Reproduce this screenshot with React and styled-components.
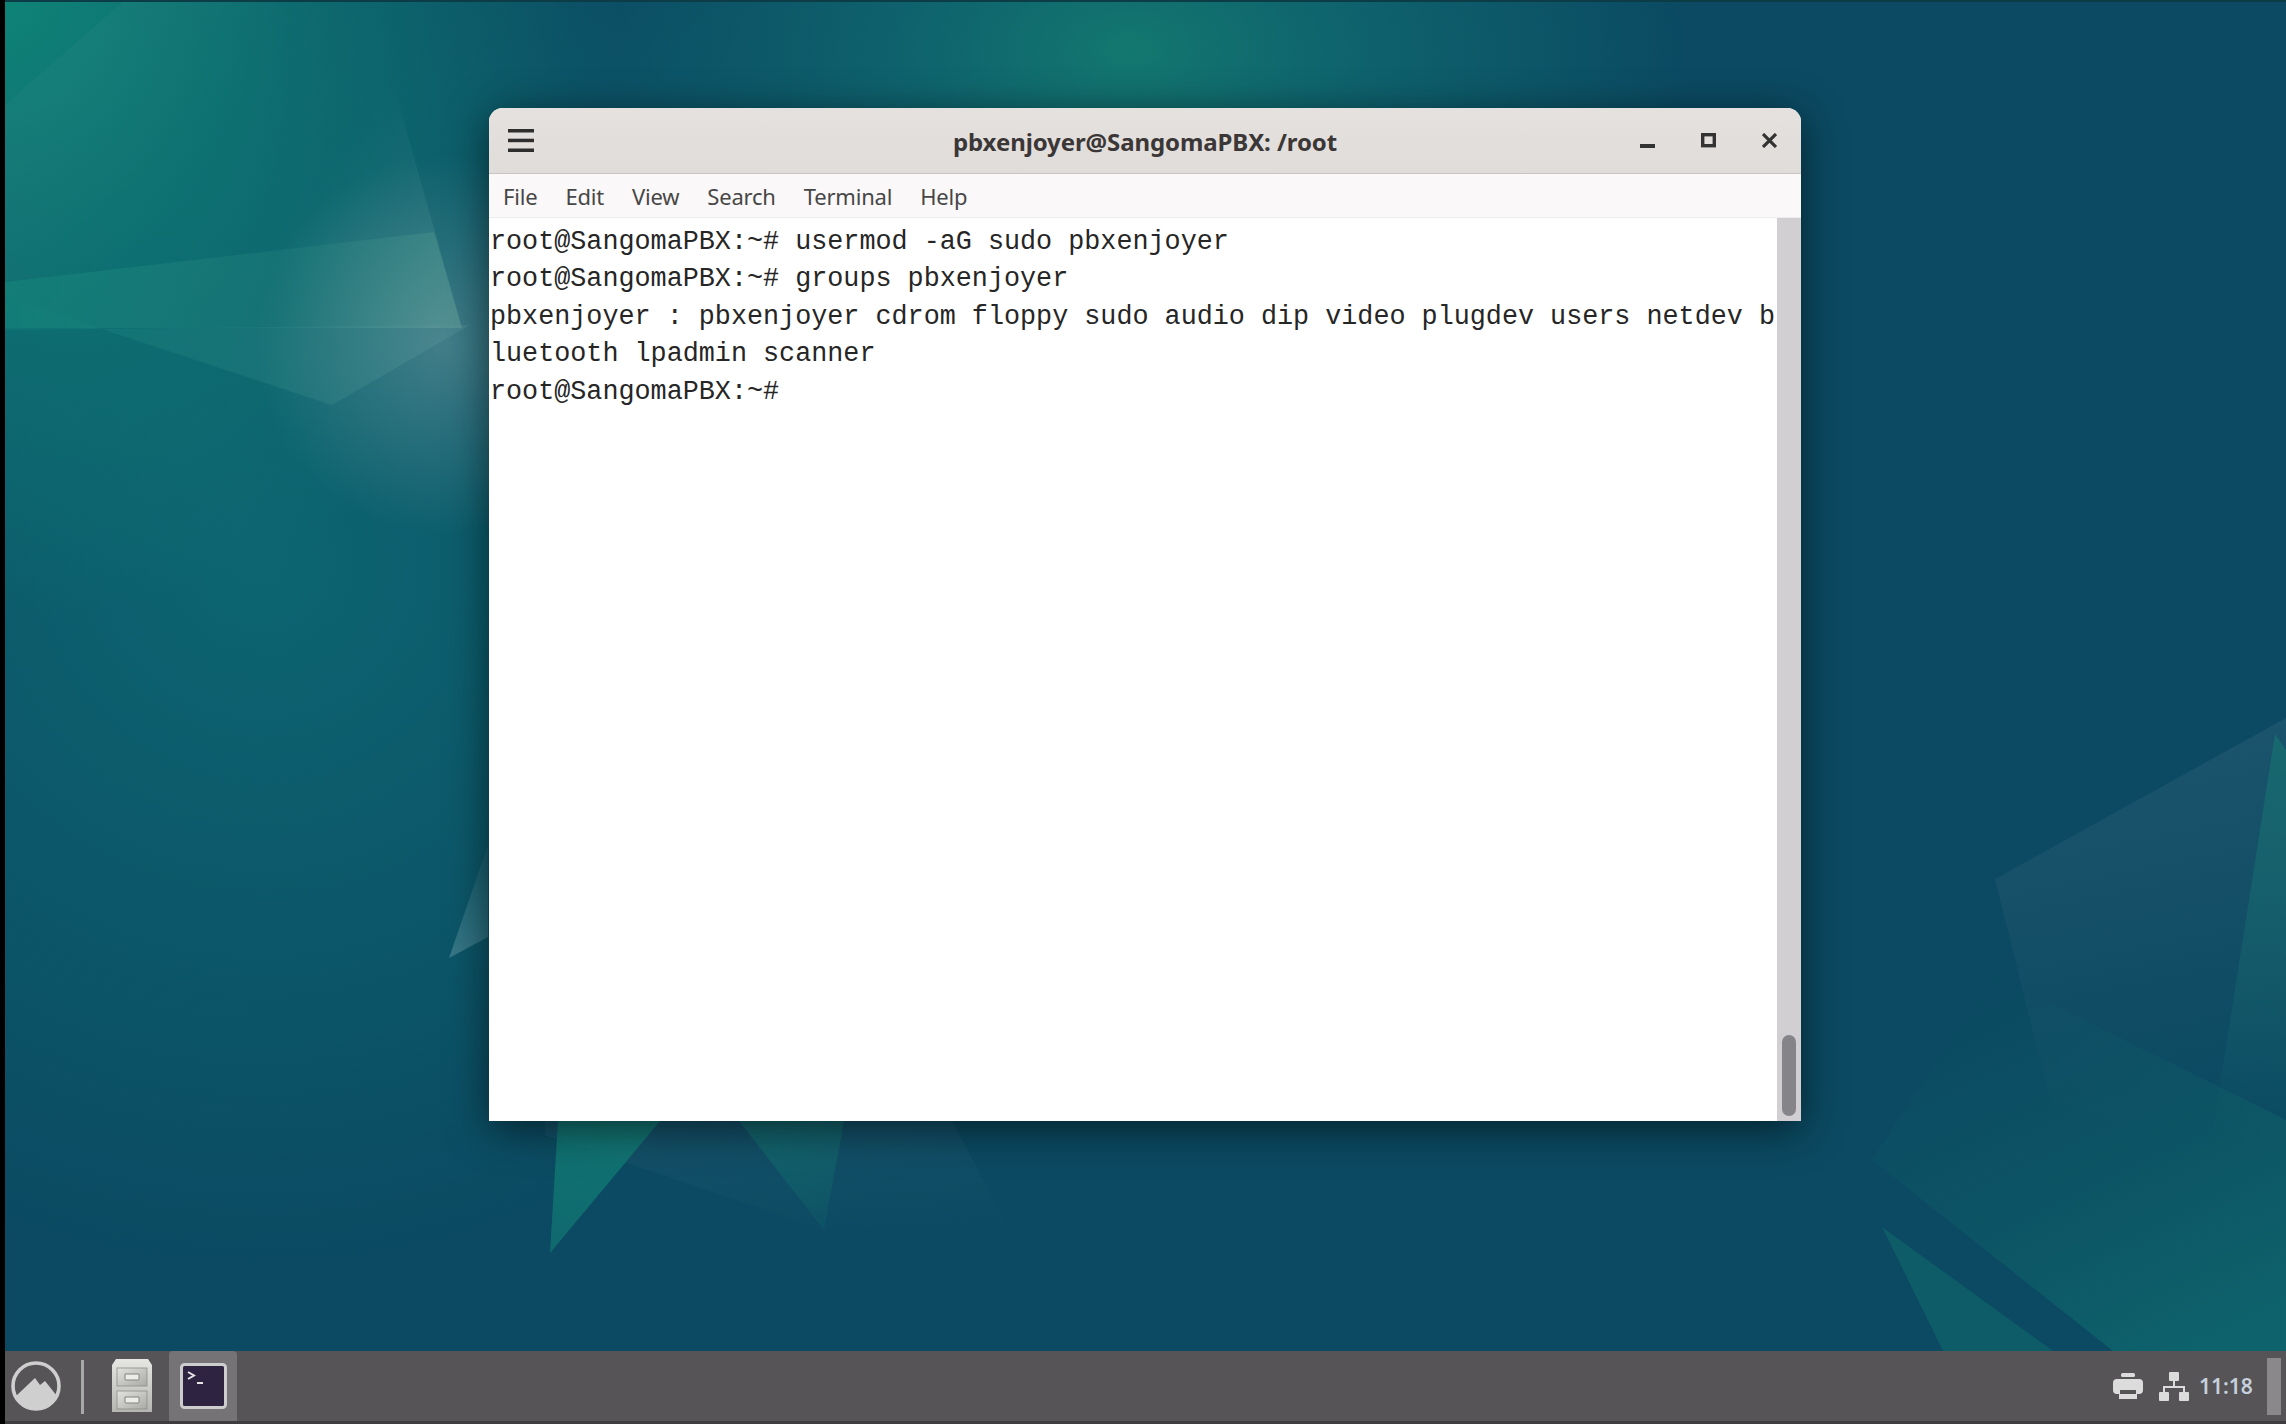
import React from 'react';
import styled, { createGlobalStyle } from 'styled-components';

const GlobalStyle = createGlobalStyle`
  html, body { margin: 0; padding: 0; background: #000; overflow: hidden; }
  #root { width: 2286px; height: 1424px; }
`;

const Screen = styled.div`
  width: 2286px;
  height: 1424px;
  display: flex;
  background: #000;
`;

const BlackEdge = styled.div`
  width: 5px;
  flex: none;
`;

const Desktop = styled.div`
  flex: 1;
  display: flex;
  flex-direction: column;
  min-width: 0;
`;

const Workspace = styled.div`
  position: relative;
  flex: 1;
  border-top: 2px solid #0c3d47;
  overflow: hidden;
`;

const WallpaperSvg = styled.svg`
  position: absolute;
  inset: 0;
  width: 100%;
  height: 100%;
`;

const TerminalWindow = styled.div`
  position: absolute;
  left: 484px;
  top: 106px;
  width: 1312px;
  height: 1013px;
  display: flex;
  flex-direction: column;
  border-radius: 14px 14px 0 0;
  box-shadow: 0 8px 40px rgba(0, 0, 0, 0.55);
  background: #fff;
  overflow: hidden;
`;

const TitleBar = styled.div`
  height: 65px;
  flex: none;
  display: flex;
  align-items: center;
  justify-content: space-between;
  padding: 0 24px 0 19px;
  background: linear-gradient(#e5e1df, #e0dcd9);
  border-bottom: 1px solid #c9c4bf;
  position: relative;
`;

const Title = styled.div`
  position: absolute;
  left: 0;
  right: 0;
  text-align: center;
  font-family: "Noto Sans", sans-serif;
  font-weight: 700;
  font-size: 24px;
  letter-spacing: -0.1px;
  color: #3b3737;
  padding-top: 2px;
`;

const WindowButtons = styled.div`
  display: flex;
  align-items: center;
  gap: 46px;
`;

const MenuBar = styled.div`
  height: 43px;
  flex: none;
  display: flex;
  align-items: center;
  gap: 28px;
  padding: 0 14px;
  background: #faf8f8;
  border-bottom: 1px solid #eeecec;
`;

const MenuItem = styled.span`
  font-family: "Noto Sans", sans-serif;
  font-size: 22px;
  letter-spacing: -0.2px;
  color: #474747;
`;

const TerminalBody = styled.div`
  flex: 1;
  display: flex;
  min-height: 0;
`;

const Output = styled.div`
  flex: 1;
  padding: 6px 0 0 1px;
  font-family: "Liberation Mono", monospace;
  font-size: 26.77px;
  line-height: 37.4px;
  color: #262626;
  background: #fff;
`;

const Line = styled.div`
  white-space: pre;
  height: 37.4px;
`;

const ScrollTrack = styled.div`
  width: 24px;
  flex: none;
  display: flex;
  flex-direction: column;
  justify-content: flex-end;
  align-items: center;
  padding-bottom: 5px;
  background: #d1cfd2;
`;

const ScrollThumb = styled.div`
  width: 14px;
  height: 81px;
  border-radius: 7px;
  background: #858488;
`;

const Taskbar = styled.div`
  height: 73px;
  flex: none;
  display: flex;
  align-items: stretch;
  justify-content: space-between;
  box-sizing: border-box;
  background: #565456;
  border-bottom: 3px solid #3d3c3e;
`;

const Launchers = styled.div`
  display: flex;
  align-items: center;
`;

const LogoButton = styled.div`
  display: flex;
  margin-left: 6px;
`;

const Separator = styled.div`
  width: 3px;
  height: 54px;
  margin: 2px 28px 0 20px;
  background: #a9a8a9;
`;

const TaskButton = styled.div`
  width: 68px;
  align-self: stretch;
  margin-left: 17px;
  display: flex;
  align-items: center;
  justify-content: center;
  border-radius: 4px 4px 0 0;
  background: #757375;
`;

const Tray = styled.div`
  display: flex;
  align-items: center;
`;

const TrayIcon = styled.div`
  display: flex;
  margin-right: ${({ $gap }) => $gap}px;
`;

const Clock = styled.span`
  font-family: "Noto Sans", sans-serif;
  font-size: 21px;
  font-weight: 600;
  color: #c5d0dc;
  width: 68px;
`;

const ShowDesktop = styled.div`
  width: 14px;
  height: 57px;
  margin-right: 5px;
  background: #8a888a;
`;

const Wallpaper = () => (
  <WallpaperSvg viewBox="5 2 2281 1349" preserveAspectRatio="none">
    <defs>
      <radialGradient id="cornerTeal" gradientUnits="userSpaceOnUse" cx="0" cy="0" r="620">
        <stop offset="0" stopColor="#0f8377" />
        <stop offset="1" stopColor="#0f8377" stopOpacity="0" />
      </radialGradient>
      <radialGradient id="midTeal" gradientUnits="userSpaceOnUse" cx="260" cy="560" r="720">
        <stop offset="0" stopColor="#0d6a74" stopOpacity="0.85" />
        <stop offset="1" stopColor="#0d6a74" stopOpacity="0" />
      </radialGradient>
      <radialGradient
        id="topTeal"
        gradientUnits="userSpaceOnUse"
        cx="0"
        cy="0"
        r="1"
        gradientTransform="translate(1130 50) scale(560 340)"
      >
        <stop offset="0" stopColor="#13786f" />
        <stop offset="0.45" stopColor="#0f6870" stopOpacity="0.75" />
        <stop offset="1" stopColor="#0f6870" stopOpacity="0" />
      </radialGradient>
      <radialGradient id="flare" gradientUnits="userSpaceOnUse" cx="445" cy="345" r="190">
        <stop offset="0" stopColor="#9fb6bb" stopOpacity="0.36" />
        <stop offset="1" stopColor="#9fb6bb" stopOpacity="0" />
      </radialGradient>
      <linearGradient id="beam" gradientUnits="userSpaceOnUse" x1="5" y1="300" x2="462" y2="320">
        <stop offset="0" stopColor="#17887c" stopOpacity="0.55" />
        <stop offset="0.6" stopColor="#2a8a82" stopOpacity="0.26" />
        <stop offset="1" stopColor="#4d9a8f" stopOpacity="0.55" />
      </linearGradient>
      <linearGradient id="kite" gradientUnits="userSpaceOnUse" x1="5" y1="320" x2="440" y2="350">
        <stop offset="0" stopColor="#0f7f78" stopOpacity="0.4" />
        <stop offset="1" stopColor="#3f8b8c" stopOpacity="0.3" />
      </linearGradient>
      <linearGradient id="wedge" gradientUnits="userSpaceOnUse" x1="100" y1="30" x2="420" y2="260">
        <stop offset="0" stopColor="#4a8f92" stopOpacity="0.12" />
        <stop offset="0.4" stopColor="#4a8f92" stopOpacity="0" />
        <stop offset="0.68" stopColor="#5a9d9c" stopOpacity="0" />
        <stop offset="1" stopColor="#5a9d9c" stopOpacity="0.22" />
      </linearGradient>
      <linearGradient id="panelBlue" gradientUnits="userSpaceOnUse" x1="2100" y1="760" x2="2170" y2="1110">
        <stop offset="0" stopColor="#2a5c75" stopOpacity="0.5" />
        <stop offset="1" stopColor="#2a5c75" stopOpacity="0" />
      </linearGradient>
      <linearGradient id="panelTeal" gradientUnits="userSpaceOnUse" x1="2010" y1="1000" x2="2180" y2="1351">
        <stop offset="0" stopColor="#0f5f66" stopOpacity="0.04" />
        <stop offset="1" stopColor="#0f6c70" stopOpacity="0.7" />
      </linearGradient>
      <linearGradient id="sliver" gradientUnits="userSpaceOnUse" x1="2270" y1="740" x2="2240" y2="1140">
        <stop offset="0" stopColor="#17686f" stopOpacity="1" />
        <stop offset="1" stopColor="#17686f" stopOpacity="0" />
      </linearGradient>
      <linearGradient id="spike" gradientUnits="userSpaceOnUse" x1="600" y1="1121" x2="560" y2="1253">
        <stop offset="0" stopColor="#117a74" stopOpacity="0.85" />
        <stop offset="1" stopColor="#117a74" stopOpacity="0.65" />
      </linearGradient>
      <linearGradient id="spikeSoft" gradientUnits="userSpaceOnUse" x1="790" y1="1121" x2="824" y2="1230">
        <stop offset="0" stopColor="#13726f" stopOpacity="0.6" />
        <stop offset="1" stopColor="#13726f" stopOpacity="0.15" />
      </linearGradient>
      <linearGradient id="band" gradientUnits="userSpaceOnUse" x1="760" y1="1121" x2="770" y2="1240">
        <stop offset="0" stopColor="#2a5f7a" stopOpacity="0.3" />
        <stop offset="1" stopColor="#2a5f7a" stopOpacity="0.02" />
      </linearGradient>
      <linearGradient id="shard" gradientUnits="userSpaceOnUse" x1="488" y1="850" x2="449" y2="958">
        <stop offset="0" stopColor="#3c7b86" stopOpacity="0.2" />
        <stop offset="1" stopColor="#4b8895" stopOpacity="0.7" />
      </linearGradient>
    </defs>
    <rect x="0" y="0" width="2286" height="1351" fill="#0b4a62" />
    <rect x="0" y="0" width="2286" height="1351" fill="url(#midTeal)" />
    <rect x="0" y="0" width="2286" height="1351" fill="url(#cornerTeal)" />
    <rect x="0" y="0" width="2286" height="1351" fill="url(#topTeal)" />
    <polygon points="125,0 5,105 5,282 434,232 462,328 395,90 270,0" fill="url(#wedge)" />
    <polygon points="5,282 434,232 462,328 5,328" fill="url(#beam)" />
    <polygon points="5,297 332,405 470,325 5,330" fill="url(#kite)" />
    <rect x="200" y="100" width="500" height="500" fill="url(#flare)" />
    <polygon points="488,845 449,958 488,937" fill="url(#shard)" />
    <polygon points="545,1121 545,1135 824,1230 1010,1230 952,1121" fill="url(#band)" />
    <polygon points="558,1121 660,1121 550,1253" fill="url(#spike)" />
    <polygon points="739,1121 844,1121 824,1230" fill="url(#spikeSoft)" />
    <polygon points="1995,879 2286,718 2286,1160 2050,1100" fill="url(#panelBlue)" />
    <polygon points="1872,1160 1993,975 2286,1120 2286,1351 2113,1351" fill="url(#panelTeal)" />
    <polygon points="2275,734 2286,750 2286,1330 2213,1130" fill="url(#sliver)" />
    <polygon points="1882,1227 1943,1351 2053,1351" fill="#0e5c68" />
  </WallpaperSvg>
);

const MenuIcon = () => (
  <svg width="26" height="23" viewBox="0 0 26 23" fill="#2e2e2e">
    <rect x="0" y="0" width="26" height="3.5" />
    <rect x="0" y="9.7" width="26" height="3.5" />
    <rect x="0" y="19.5" width="26" height="3.5" />
  </svg>
);

const MinimizeIcon = () => (
  <svg width="15" height="15" viewBox="0 0 15 15" fill="#333">
    <rect x="0" y="11" width="15" height="4" />
  </svg>
);

const MaximizeIcon = () => (
  <svg width="15" height="15" viewBox="0 0 15 15" fill="none" stroke="#333" strokeWidth="3.4">
    <rect x="1.7" y="1.7" width="11.6" height="11" />
  </svg>
);

const CloseIcon = () => (
  <svg width="15" height="15" viewBox="0 0 15 15" fill="none" stroke="#333" strokeWidth="3.2">
    <path d="M1 1 L14 14 M14 1 L1 14" />
  </svg>
);

const LogoIcon = () => (
  <svg width="50" height="50" viewBox="0 0 50 50">
    <circle cx="25" cy="25" r="23" fill="none" stroke="#cfcfcf" strokeWidth="3.6" />
    <path d="M5 35 L24 17 L29 24 L34 20 L46 35 A23 23 0 0 1 5 35 Z" fill="#cfcfcf" />
  </svg>
);

const FilesIcon = () => (
  <svg width="40" height="54" viewBox="0 0 40 54">
    <defs>
      <linearGradient id="cabinetBody" x1="0" y1="0" x2="0" y2="1">
        <stop offset="0" stopColor="#e6e6e3" />
        <stop offset="1" stopColor="#b5b5b1" />
      </linearGradient>
      <linearGradient id="cabinetDrawer" x1="0" y1="0" x2="1" y2="1">
        <stop offset="0" stopColor="#e2e2de" />
        <stop offset="1" stopColor="#a9a9a5" />
      </linearGradient>
    </defs>
    <path d="M4 0 H36 L40 6 V53 H0 V6 Z" fill="url(#cabinetBody)" />
    <rect x="5" y="9" width="30" height="18" fill="url(#cabinetDrawer)" stroke="#8d8d89" strokeWidth="0.8" />
    <rect x="5" y="32" width="30" height="18" fill="url(#cabinetDrawer)" stroke="#8d8d89" strokeWidth="0.8" />
    <path d="M13 15 H27 V20 Q27 21 26 21 H14 Q13 21 13 20 Z" fill="#ecece9" stroke="#82827e" strokeWidth="1" />
    <path d="M13 38 H27 V43 Q27 44 26 44 H14 Q13 44 13 43 Z" fill="#ecece9" stroke="#82827e" strokeWidth="1" />
  </svg>
);

const TerminalIcon = () => (
  <svg width="47" height="46" viewBox="0 0 47 46">
    <rect x="1.5" y="1.5" width="44" height="43" rx="3" fill="#2e2340" stroke="#cdcdcd" strokeWidth="3" />
    <path d="M8 9 L14 12.5 L8 16" fill="none" stroke="#e4e4e4" strokeWidth="2" />
    <rect x="17" y="19" width="6" height="2" fill="#e4e4e4" />
  </svg>
);

const PrinterIcon = () => (
  <svg width="30" height="26" viewBox="0 0 30 26" fill="#dcdcdc">
    <rect x="8" y="0" width="14" height="4" rx="1.5" />
    <path d="M4 6 H26 A4 4 0 0 1 30 10 V17 A4 4 0 0 1 26 21 H24 V26 H6 V21 H4 A4 4 0 0 1 0 17 V10 A4 4 0 0 1 4 6 Z" />
    <rect x="7" y="17" width="16" height="4" fill="#565456" />
  </svg>
);

const NetworkIcon = () => (
  <svg width="30" height="29" viewBox="0 0 30 29" fill="#dcdcdc">
    <rect x="10" y="0" width="10" height="9" rx="1" />
    <rect x="14" y="9" width="2" height="6" />
    <rect x="4" y="14" width="22" height="2" />
    <rect x="4" y="14" width="2" height="6" />
    <rect x="24" y="14" width="2" height="6" />
    <rect x="0" y="20" width="10" height="9" rx="1" />
    <rect x="20" y="20" width="10" height="9" rx="1" />
  </svg>
);

const menuItems = ['File', 'Edit', 'View', 'Search', 'Terminal', 'Help'];

const outputLines = [
  'root@SangomaPBX:~# usermod -aG sudo pbxenjoyer',
  'root@SangomaPBX:~# groups pbxenjoyer',
  'pbxenjoyer : pbxenjoyer cdrom floppy sudo audio dip video plugdev users netdev b',
  'luetooth lpadmin scanner',
  'root@SangomaPBX:~# ',
];

const App = () => (
  <Screen>
    <GlobalStyle />
    <BlackEdge />
    <Desktop>
      <Workspace>
        <Wallpaper />
        <TerminalWindow>
          <TitleBar>
            <MenuIcon />
            <Title>pbxenjoyer@SangomaPBX: /root</Title>
            <WindowButtons>
              <MinimizeIcon />
              <MaximizeIcon />
              <CloseIcon />
            </WindowButtons>
          </TitleBar>
          <MenuBar>
            {menuItems.map((item) => (
              <MenuItem key={item}>{item}</MenuItem>
            ))}
          </MenuBar>
          <TerminalBody>
            <Output>
              {outputLines.map((line) => (
                <Line key={line}>{line}</Line>
              ))}
            </Output>
            <ScrollTrack>
              <ScrollThumb />
            </ScrollTrack>
          </TerminalBody>
        </TerminalWindow>
      </Workspace>
      <Taskbar>
        <Launchers>
          <LogoButton>
            <LogoIcon />
          </LogoButton>
          <Separator />
          <FilesIcon />
          <TaskButton>
            <TerminalIcon />
          </TaskButton>
        </Launchers>
        <Tray>
          <TrayIcon $gap={16}>
            <PrinterIcon />
          </TrayIcon>
          <TrayIcon $gap={10}>
            <NetworkIcon />
          </TrayIcon>
          <Clock>11:18</Clock>
          <ShowDesktop />
        </Tray>
      </Taskbar>
    </Desktop>
  </Screen>
);

export default App;
